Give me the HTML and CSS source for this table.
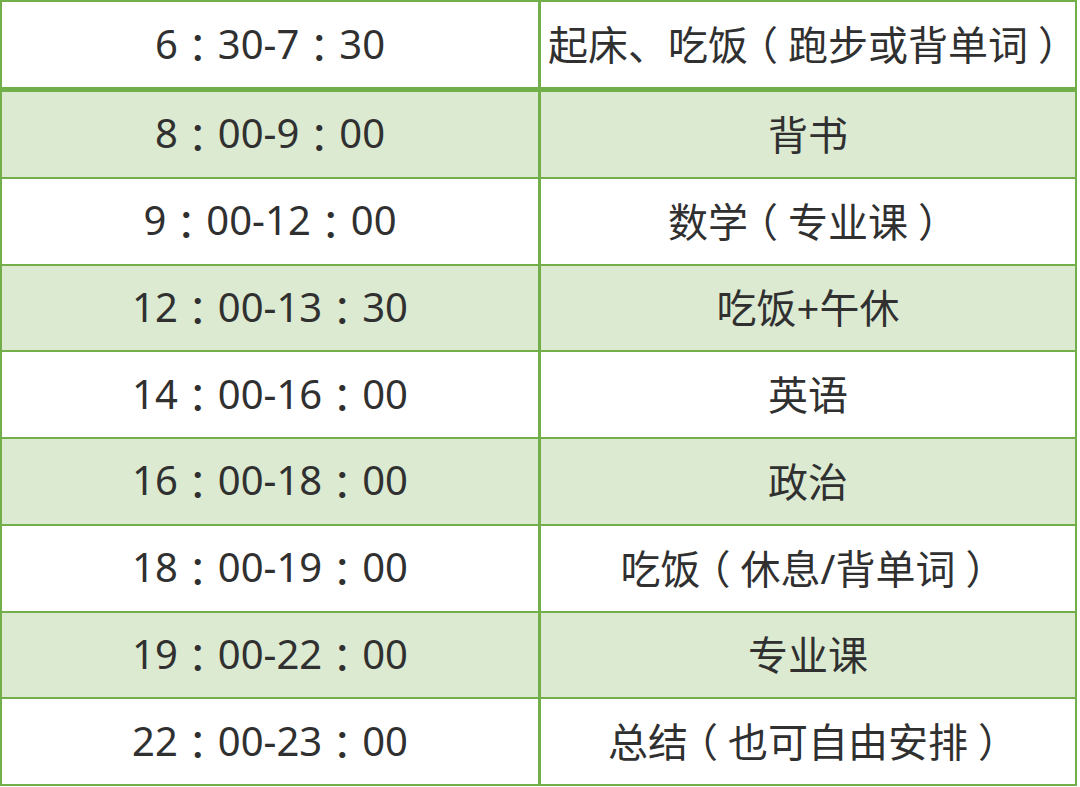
FILE: index.html
```html
<!DOCTYPE html>
<html lang="zh-CN">
<head>
<meta charset="utf-8">
<title>作息时间表</title>
<link rel="stylesheet" href="styles.css">
</head>
<body>
<div class="table">
  <div class="row head"><div class="cell">6<span class="p">：</span>30-7<span class="p">：</span>30</div><div class="cell">起床、吃饭<span class="p">（</span>跑步或背单词<span class="p">）</span></div></div>
  <div class="row alt"><div class="cell">8<span class="p">：</span>00-9<span class="p">：</span>00</div><div class="cell">背书</div></div>
  <div class="row"><div class="cell">9<span class="p">：</span>00-12<span class="p">：</span>00</div><div class="cell">数学<span class="p">（</span>专业课<span class="p">）</span></div></div>
  <div class="row alt"><div class="cell">12<span class="p">：</span>00-13<span class="p">：</span>30</div><div class="cell">吃饭+午休</div></div>
  <div class="row"><div class="cell">14<span class="p">：</span>00-16<span class="p">：</span>00</div><div class="cell">英语</div></div>
  <div class="row alt"><div class="cell">16<span class="p">：</span>00-18<span class="p">：</span>00</div><div class="cell">政治</div></div>
  <div class="row"><div class="cell">18<span class="p">：</span>00-19<span class="p">：</span>00</div><div class="cell">吃饭<span class="p">（</span>休息/背单词<span class="p">）</span></div></div>
  <div class="row alt"><div class="cell">19<span class="p">：</span>00-22<span class="p">：</span>00</div><div class="cell">专业课</div></div>
  <div class="row"><div class="cell">22<span class="p">：</span>00-23<span class="p">：</span>00</div><div class="cell">总结<span class="p">（</span>也可自由安排<span class="p">）</span></div></div>
</div>
</body>
</html>
```

FILE: styles.css
```css
html, body {
  margin: 0;
  padding: 0;
  background: #ffffff;
}
.table {
  width: 1077px;
  height: 786px;
  box-sizing: border-box;
  border: 2px solid #72ae4a;
  display: flex;
  flex-direction: column;
  font-family: "Noto Sans", "Noto Sans CJK SC", sans-serif;
  font-size: 40px;
  color: #303030;
}
.row {
  flex: 1 1 0;
  display: grid;
  grid-template-columns: 536px 1fr;
  border-bottom: 2px solid #72ae4a;
}
.row:last-child {
  border-bottom: none;
}
.row.head {
  flex: 0 0 90px;
  border-bottom: 5px solid #72ae4a;
  box-sizing: border-box;
}
.row.alt {
  background: #dbead0;
}
.cell {
  display: flex;
  align-items: center;
  justify-content: center;
  white-space: nowrap;
  padding-bottom: 3px;
}
.cell + .cell {
  border-left: 3px solid #72ae4a;
}
.p {
  font-feature-settings: "halt" 1;
  padding: 0 0.25em;
}
```
